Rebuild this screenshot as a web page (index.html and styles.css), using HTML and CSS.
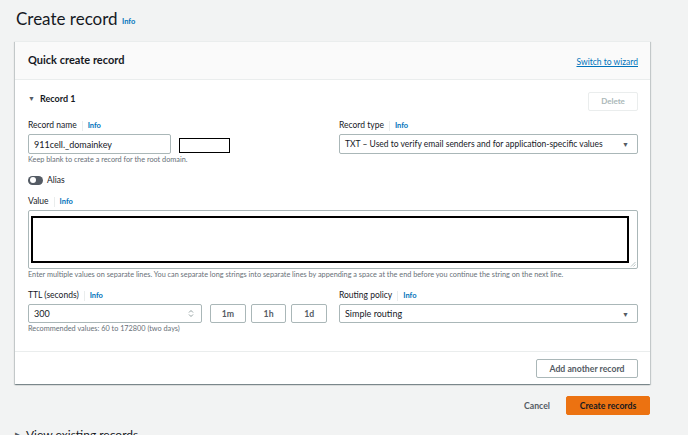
FILE: index.html
```html
<!DOCTYPE html>
<html>
<head>
<meta charset="utf-8">
<link rel="stylesheet" href="styles.css">
</head>
<body>
<div class="page">
  <h1 class="title">Create record <span class="info">Info</span></h1>
  <section class="card">
    <header class="card-head">
      <h2>Quick create record</h2>
      <a class="link">Switch to wizard</a>
    </header>
    <div class="card-body">
      <div class="rec-head">
        <span class="rec-title"><span class="tri">▼</span>Record 1</span>
        <button class="btn btn-disabled">Delete</button>
      </div>
      <div class="grid">
        <div class="field">
          <div class="label">Record name <span class="sep"></span><span class="info">Info</span></div>
          <div class="name-row">
            <div class="input name-input">911cell._domainkey</div>
            <div class="redact-small"></div>
          </div>
          <div class="hint">Keep blank to create a record for the root domain.</div>
        </div>
        <div class="field">
          <div class="label">Record type <span class="sep"></span><span class="info">Info</span></div>
          <div class="input select">TXT – Used to verify email senders and for application-specific values<span class="caret">▼</span></div>
        </div>
      </div>
      <div class="alias"><span class="toggle"><span class="knob"></span></span>Alias</div>
      <div class="label value-label">Value <span class="sep"></span><span class="info">Info</span></div>
      <div class="textarea">
        <div class="redact-big"></div>
        <svg class="grip" width="6" height="6" viewBox="0 0 6 6"><path d="M5.5 1 L1 5.5 M5.5 3.5 L3.5 5.5" stroke="#aab7b8" stroke-width="0.8"/></svg>
      </div>
      <div class="hint">Enter multiple values on separate lines. You can separate long strings into separate lines by appending a space at the end before you continue the string on the next line.</div>
      <div class="grid grid-ttl">
        <div class="field">
          <div class="label">TTL (seconds) <span class="sep"></span><span class="info">Info</span></div>
          <div class="ttl-row">
            <div class="input ttl-input">300<svg class="spin" width="6" height="9" viewBox="0 0 6 9"><path d="M1 3.5 L3 1.5 L5 3.5 M1 5.5 L3 7.5 L5 5.5" fill="none" stroke="#879596" stroke-width="0.9"/></svg></div>
            <button class="btn small">1m</button>
            <button class="btn small">1h</button>
            <button class="btn small">1d</button>
          </div>
          <div class="hint">Recommended values: 60 to 172800 (two days)</div>
        </div>
        <div class="field">
          <div class="label">Routing policy <span class="sep"></span><span class="info">Info</span></div>
          <div class="input select">Simple routing<span class="caret">▼</span></div>
        </div>
      </div>
    </div>
    <footer class="card-foot">
      <button class="btn">Add another record</button>
    </footer>
  </section>
  <div class="actions">
    <button class="btn-link">Cancel</button>
    <button class="btn-primary">Create records</button>
  </div>
  <div class="existing"><span class="tri-r">▶</span>View existing records</div>
</div>
</body>
</html>
```

FILE: styles.css
```css
* { box-sizing: border-box; }
html, body { margin: 0; padding: 0; }
body {
  background: #f2f3f3;
  font-family: "Lato", "Noto Sans", sans-serif;
  color: #16191f;
  width: 688px;
  height: 435px;
  overflow: hidden;
}
.page { padding: 0 38px 0 15px; }
.title {
  margin: 0;
  padding: 8px 0 0 1px;
  height: 41px;
  font-size: 17px;
  font-weight: 400;
  line-height: 22px;
}
.title .info { font-size: 7.5px; vertical-align: 1px; margin-left: 0; }
.info {
  color: #0073bb;
  font-weight: 700;
  font-size: 7.5px;
}
.card {
  background: #fff;
  border-top: 1px solid #eaeded;
  box-shadow: 0 1px 1px 0 rgba(0, 28, 36, .3), 1px 1px 1px 0 rgba(0, 28, 36, .15), -1px 1px 1px 0 rgba(0, 28, 36, .15);
  width: 635px;
}
.card-head {
  background: #fafafa;
  height: 38px;
  border-bottom: 1px solid #eaeded;
  display: flex;
  align-items: center;
  justify-content: space-between;
  padding: 0 12px 0 13px;
}
.card-head h2 {
  margin: 0;
  font-size: 11px;
  font-weight: 700;
  margin-top: -2px;
}
.link {
  color: #0073bb;
  font-size: 8.5px;
  text-decoration: underline;
  margin-top: 3px;
}
.card-body { padding: 12px 12px 0 13px; }
.rec-head {
  display: flex;
  justify-content: space-between;
  align-items: center;
  height: 18px;
}
.rec-title { font-size: 9px; font-weight: 700; display: flex; align-items: center; margin-top: -6px; }
.tri { font-size: 7px; color: #545b64; margin-right: 5px; }
.btn {
  font-family: inherit;
  background: #fff;
  border: 1px solid #aab7b8;
  border-radius: 2px;
  color: #545b64;
  font-weight: 700;
  font-size: 8.7px;
  height: 19px;
  padding: 0 11px;
}
.btn-disabled { color: #aab7b8; border-color: #eaeded; width: 50px; padding: 0; font-size: 8px; }
.grid {
  display: grid;
  grid-template-columns: 299px 299px;
  column-gap: 12px;
  margin-top: 9px;
}
.label {
  font-size: 8.5px;
  height: 13px;
  line-height: 13px;
  display: flex;
  align-items: center;
  color: #16191f;
}
.sep {
  display: inline-block;
  width: 1px;
  height: 10px;
  background: #eaeded;
  margin: 0 5px 0 5px;
}
.input {
  border: 1px solid #aab7b8;
  border-radius: 2px;
  height: 20px;
  font-size: 8.5px;
  display: flex;
  align-items: center;
  padding: 0 6px 0 5px;
  margin-top: 2px;
  background: #fff;
}
.name-row { display: flex; align-items: center; }
.name-input { width: 143px; font-size: 9px; }
.redact-small {
  width: 51px;
  height: 15px;
  border: 1.5px solid #000;
  margin-left: 8px;
  margin-top: 4px;
}
.hint {
  font-size: 7.3px;
  color: #687078;
  margin-top: 1px;
  line-height: 9px;
}
.select { justify-content: space-between; padding-right: 8px; }
.caret { font-size: 7px; color: #545b64; }
.alias {
  display: flex;
  align-items: center;
  font-size: 8.5px;
  margin-top: 10px;
  height: 12px;
}
.toggle {
  width: 15px;
  height: 9px;
  border-radius: 5px;
  background: #545b64;
  position: relative;
  margin-right: 4px;
}
.knob {
  position: absolute;
  left: 1.5px;
  top: 1.5px;
  width: 6px;
  height: 6px;
  border-radius: 50%;
  background: #fff;
}
.value-label { margin-top: 9px; }
.textarea {
  position: relative;
  height: 59px;
  border: 1px solid #aab7b8;
  border-radius: 2px;
  margin-top: 2px;
  padding: 5px 8px 5px 2px;
}
.redact-big {
  height: 47px;
  border: 2px solid #000;
}
.grip { position: absolute; right: 1px; bottom: 1px; }
.grid-ttl { margin-top: 10px; }
.grid-ttl .input { height: 19px; font-size: 9px; }
.ttl-row { display: flex; align-items: center; gap: 5px; }
.ttl-input { width: 176px; margin-right: 3px; justify-content: space-between; padding-right: 7px; }
.btn.small { width: 36px; padding: 0; height: 19px; margin-top: 2px; }
.card-foot {
  margin-top: 18px;
  border-top: 1px solid #eaeded;
  height: 33px;
  display: flex;
  justify-content: flex-end;
  align-items: center;
  padding: 0 12px;
}
.card-foot .btn { height: 19px; width: 102px; padding: 0; }
.actions {
  display: flex;
  justify-content: flex-end;
  align-items: center;
  width: 635px;
  margin-top: 12px;
  gap: 16px;
}
.btn-link {
  font-family: inherit;
  background: none;
  border: none;
  font-weight: 700;
  font-size: 8.7px;
  color: #545b64;
  padding: 0;
}
.btn-primary {
  font-family: inherit;
  background: #ec7211;
  border: 1px solid #ec7211;
  border-radius: 2px;
  font-weight: 700;
  font-size: 8.7px;
  color: #16191f;
  height: 19px;
  width: 84px;
  padding: 0;
}
.existing {
  margin-top: 12px;
  font-size: 12px;
  display: flex;
  align-items: center;
  color: #16191f;
}
.tri-r { font-size: 7px; color: #545b64; margin-right: 6px; }
```
